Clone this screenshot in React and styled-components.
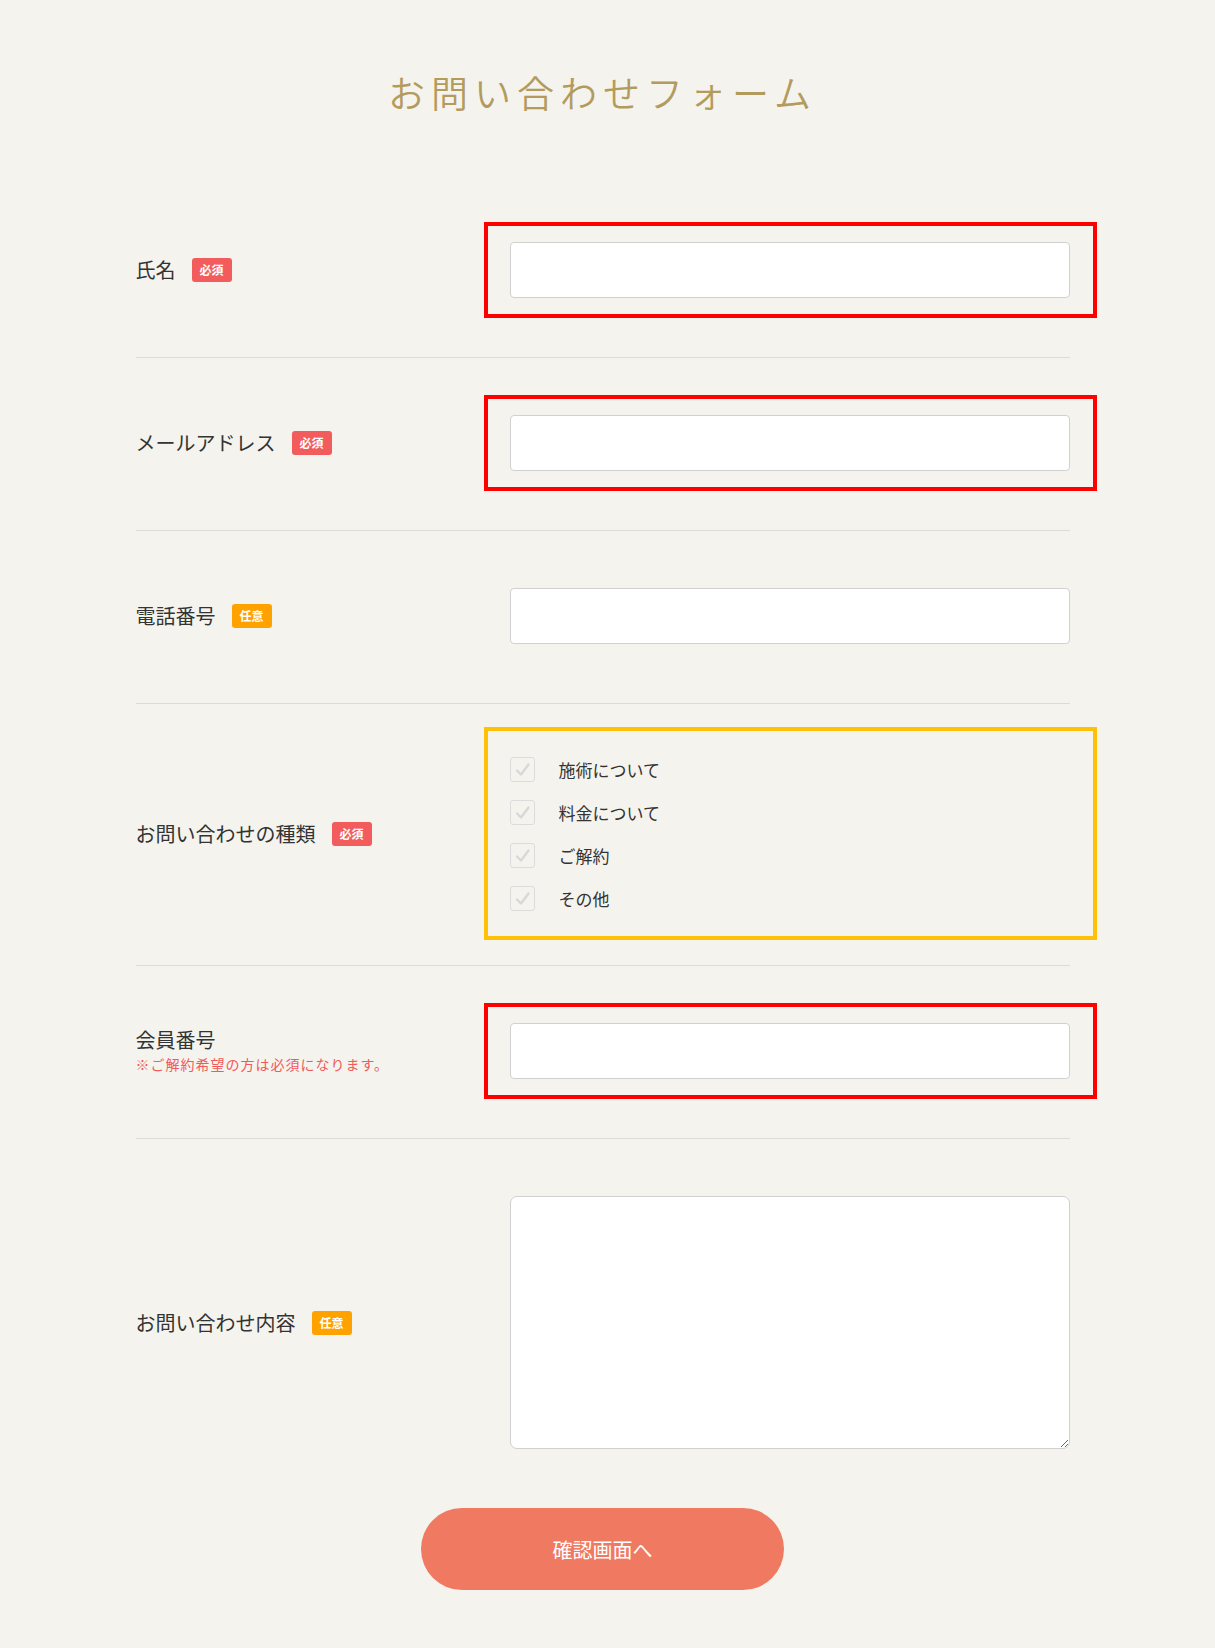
import React from "react";
import styled, { createGlobalStyle } from "styled-components";

const GlobalStyle = createGlobalStyle`
  html, body {
    margin: 0;
    padding: 0;
    background: #f5f3ee;
  }
  body {
    font-family: "Noto Sans CJK JP", "Noto Sans", sans-serif;
    color: #333;
    padding-right: 10px;
  }
  * { box-sizing: border-box; }
`;

const Page = styled.main`
  width: 934px;
  margin: 0 auto;
  padding: 65px 0 58px;
`;

const Title = styled.h1`
  margin: 0 0 66px;
  text-align: center;
  font-size: 37px;
  line-height: 54px;
  font-weight: 350;
  letter-spacing: 6px;
  color: #b39b5d;
`;

const Row = styled.div`
  display: grid;
  grid-template-columns: 374px 1fr;
  align-items: center;
  padding: ${(p) => p.$pad || "57px 0 59px"};
  border-bottom: ${(p) => (p.$last ? "none" : "1px solid #dddbd6")};
`;

const LabelBox = styled.div`
  display: flex;
  flex-direction: column;
`;

const LabelLine = styled.div`
  display: flex;
  align-items: center;
  gap: 16px;
  font-size: 20px;
  line-height: 26px;
  color: #333;
`;

const Badge = styled.span`
  display: inline-flex;
  align-items: center;
  justify-content: center;
  width: 40px;
  height: 24px;
  border-radius: 3px;
  font-size: 12px;
  font-weight: 700;
  color: #fff;
  background: ${(p) => (p.$optional ? "#ffa200" : "#f25c5c")};
`;

const Note = styled.div`
  font-size: 14px;
  line-height: 22px;
  letter-spacing: 1px;
  color: #f05a5a;
`;

const Highlight = styled.div`
  margin: ${(p) => p.$margin || "-20px -27px -20px -26px"};
  padding: ${(p) => p.$padding || "16px 23px 16px 22px"};
  border: 4px solid ${(p) => p.$color || "#ff0000"};
`;

const TextInput = styled.input`
  display: block;
  width: 100%;
  height: 56px;
  border: 1px solid #d0d0d0;
  border-radius: 4px;
  background: #fff;
  font-size: 16px;
  padding: 0 14px;
  font-family: inherit;
  outline: none;
`;

const TextArea = styled.textarea`
  display: block;
  width: 100%;
  height: 253px;
  border: 1px solid #d0d0d0;
  border-radius: 7px;
  background: #fff;
  font-size: 16px;
  padding: 12px 14px;
  font-family: inherit;
  outline: none;
  resize: both;
`;

const CheckList = styled.div`
  display: flex;
  flex-direction: column;
  gap: 18px;
`;

const CheckItem = styled.label`
  display: flex;
  align-items: center;
  gap: 24px;
  height: 25px;
  font-size: 17px;
  line-height: 25px;
  color: #333;
`;

const CheckBox = styled.span`
  display: inline-flex;
  align-items: center;
  justify-content: center;
  width: 25px;
  height: 25px;
  border: 1px solid #dcdcdc;
  border-radius: 3px;
  background: #f5f3ee;
  flex-shrink: 0;
`;

const ButtonRow = styled.div`
  display: flex;
  justify-content: center;
`;

const SubmitButton = styled.button`
  width: 363px;
  height: 82px;
  border: none;
  border-radius: 41px;
  background: #f07a61;
  color: #fff;
  font-family: inherit;
  font-size: 20px;
  cursor: pointer;
`;

const Check = () => (
  <svg width="23" height="23" viewBox="0 0 23 23" fill="none">
    <polyline
      points="6,12.5 10,16.5 17.5,6.5"
      stroke="#d8d8d8"
      strokeWidth="2.4"
      strokeLinecap="round"
      strokeLinejoin="round"
    />
  </svg>
);

const Label = ({ text, optional, note }) => (
  <LabelBox>
    <LabelLine>
      {text}
      {optional !== undefined && (
        <Badge $optional={optional}>{optional ? "任意" : "必須"}</Badge>
      )}
    </LabelLine>
    {note && <Note>{note}</Note>}
  </LabelBox>
);

const types = ["施術について", "料金について", "ご解約", "その他"];

export default function App() {
  return (
    <>
      <GlobalStyle />
      <Page>
        <Title>お問い合わせフォーム</Title>

        <Row>
          <Label text="氏名" optional={false} />
          <Highlight>
            <TextInput type="text" />
          </Highlight>
        </Row>

        <Row>
          <Label text="メールアドレス" optional={false} />
          <Highlight>
            <TextInput type="email" />
          </Highlight>
        </Row>

        <Row>
          <Label text="電話番号" optional={true} />
          <TextInput type="tel" />
        </Row>

        <Row $pad="53px 0 54px">
          <Label text="お問い合わせの種類" optional={false} />
          <Highlight
            $color="#ffc107"
            $margin="-30px -27px -29px -26px"
            $padding="26px 23px 25px 22px"
          >
            <CheckList>
              {types.map((t) => (
                <CheckItem key={t}>
                  <CheckBox>
                    <Check />
                  </CheckBox>
                  {t}
                </CheckItem>
              ))}
            </CheckList>
          </Highlight>
        </Row>

        <Row>
          <Label text="会員番号" note="※ご解約希望の方は必須になります。" />
          <Highlight>
            <TextInput type="text" />
          </Highlight>
        </Row>

        <Row $last $pad="57px 0 59px">
          <Label text="お問い合わせ内容" optional={true} />
          <TextArea />
        </Row>

        <ButtonRow>
          <SubmitButton type="button">確認画面へ</SubmitButton>
        </ButtonRow>
      </Page>
    </>
  );
}
